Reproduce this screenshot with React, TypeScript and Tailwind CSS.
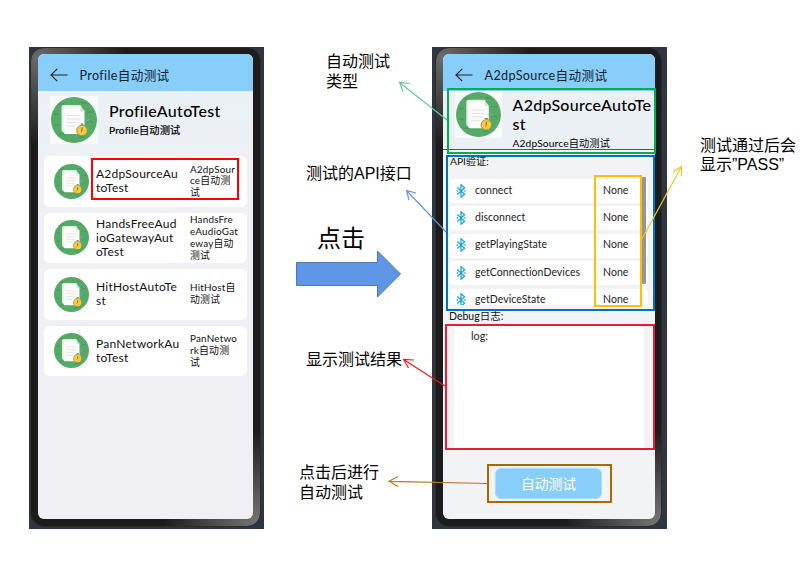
import type { ReactNode } from 'react';

const uiFont = "font-['Lato','Noto_Sans_CJK_SC',sans-serif]";

function Lines({ lines, className }: { lines: string[]; className: string }) {
  return (
    <div className={className}>
      {lines.map((line) => (
        <div key={line} className="whitespace-nowrap">{line}</div>
      ))}
    </div>
  );
}

function ReportIcon({ className }: { className: string }) {
  return (
    <svg viewBox="0 0 46 46" className={className}>
      <circle cx="23" cy="23" r="23" fill="#56aa67" />
      <path d="M8 7h5M30 6h6M3 17h5M36 15h6M3 28h5M36 25h6M8 37h6M28 40h5" stroke="#3f9152" strokeWidth="0.8" />
      <rect x="10.5" y="8" width="20" height="27" rx="2" fill="#e2eee4" />
      <path d="M14.5 9.5h15l4 4.500V35a2 2 0 0 1-2 2h-17a2 2 0 0 1-2-2V11.500a2 2 0 0 1 2-2z" fill="#fafbfa" />
      <path d="M29.500 9.500V14h4z" fill="#d5ddd6" />
      <path d="M16 18.500h13M16 22h13M16 25.500h11M16 29h8" stroke="#dde1dd" strokeWidth="0.9" />
      <path d="M8 18 18 8M14 32 33 14M22 37 38 22M10 12 34 36M24 10 40 27" stroke="#ffffff" strokeOpacity="0.18" strokeWidth="0.7" />
      <circle cx="31" cy="33.500" r="5.300" fill="#f7cb3f" stroke="#9c8a45" strokeWidth="0.9" />
      <path d="M31 30.300v3.700l-1.200 1" stroke="#7b6a35" strokeWidth="1" fill="none" />
      <path d="M29.700 27.200h2.600" stroke="#66734e" strokeWidth="1.200" />
    </svg>
  );
}

function BluetoothIcon() {
  return (
    <svg viewBox="0 0 10 14" className="h-[14px] w-[10px]" fill="none" stroke="#20a5df" strokeWidth="1.300">
      <path d="M1.300 3.400 8.600 10.200 5 13.200V.8L8.600 3.800 1.300 10.600" />
      <path d="M.6 7H2M8.200 7h1.400" strokeWidth="1.400" />
    </svg>
  );
}

function TopBar({ title }: { title: string }) {
  return (
    <div className="flex h-[37px] shrink-0 items-center bg-[#87cefa] pt-[5px] pl-[12px]">
      <svg viewBox="0 0 18 14" className="h-[14px] w-[18px]" fill="none" stroke="#17242d" strokeWidth="1.200">
        <path d="M17.500 7H1M7.200.8 1 7l6.200 6.200" />
      </svg>
      <span className="ml-[11.500px] pt-px text-[12.600px] leading-[16px] tracking-[0.350px] text-[#10202a]">{title}</span>
    </div>
  );
}

function Phone({ frame, screen, children }: { frame: string; screen: string; children: ReactNode }) {
  return (
    <div className={`h-[482px] w-[235px] shrink-0 bg-[#303641] ${frame}`}>
      <div className="h-[480px] rounded-[14px] border border-[#2b2c2e] bg-[radial-gradient(circle_at_3%_2%,#6a6a6a_0,#555_4%,transparent_17%),radial-gradient(circle_at_100%_100%,#777_0,#5a5a5a_6%,transparent_18%)] bg-[#1c1c1c] pt-[6px]">
        <div className={`flex h-[465px] flex-col overflow-hidden rounded-[6px] ${screen}`}>{children}</div>
      </div>
    </div>
  );
}

const profiles = [
  { title: ['A2dpSourceAu', 'toTest'], sub: ['A2dpSour', 'ce自动测', '试'] },
  { title: ['HandsFreeAud', 'ioGatewayAut', 'oTest'], sub: ['HandsFre', 'eAudioGat', 'eway自动', '测试'] },
  { title: ['HitHostAutoTe', 'st'], sub: ['HitHost自', '动测试'] },
  { title: ['PanNetworkAu', 'toTest'], sub: ['PanNetwo', 'rk自动测', '试'] },
];

const apis = ['connect', 'disconnect', 'getPlayingState', 'getConnectionDevices', 'getDeviceState'];

function ProfilePhone() {
  return (
    <Phone frame="pl-px pr-[3px]" screen="ml-[7px] w-[215px] bg-[#efeff4]">
      <TopBar title="Profile自动测试" />
      <div className="flex h-[61px] shrink-0 bg-linear-to-b from-[#eaf1f5] to-[#edf0f4] pt-[5px] pl-[12px]">
        <div className="flex size-[48px] items-center justify-center bg-[#f8fafa]">
          <ReportIcon className="size-[46px]" />
        </div>
        <div className="ml-[11px] pt-[5px] text-black">
          <div className="text-[16px] leading-[20px] font-medium tracking-[0.300px]">ProfileAutoTest</div>
          <div className="text-[10.200px] leading-[18px] tracking-[0.150px] [-webkit-text-stroke:0.200px_#000]">Profile自动测试</div>
        </div>
      </div>
      <div className="mt-[4px] flex flex-col gap-[6px] px-[6px]">
        {profiles.map((p) => (
          <div key={p.title[0]} className="flex h-[50.500px] items-center rounded-[6px] bg-white pl-[10px]">
            <ReportIcon className="size-[35px] shrink-0" />
            <Lines lines={p.title} className="ml-[7px] w-[94px] shrink-0 text-[12px] leading-[13.800px] tracking-[0.250px] text-[#111]" />
            <Lines lines={p.sub} className="text-[9.900px] leading-[11.800px] tracking-[0.200px] text-[#111]" />
          </div>
        ))}
      </div>
    </Phone>
  );
}

function SourcePhone() {
  return (
    <Phone frame="pl-[3px] pr-[5px]" screen="ml-[7px] w-[212px] bg-[#f1f3f5]">
      <TopBar title="A2dpSource自动测试" />
      <div className="flex h-[59px] shrink-0 border-b border-[#555] bg-[#ebf0f4] pl-[12px]">
        <div className="flex size-[47px] items-center justify-center bg-[#f8fafa]">
          <ReportIcon className="size-[45px]" />
        </div>
        <div className="ml-[10.500px] pt-[5px] text-black">
          <Lines lines={['A2dpSourceAutoTe', 'st']} className="text-[16px] leading-[18.500px] font-medium tracking-[0.250px]" />
          <div className="text-[10.200px] leading-[20px] tracking-[0.150px]">A2dpSource自动测试</div>
        </div>
      </div>
      <div className="h-[27px] shrink-0 pt-[4px] pl-[7px] text-[10.200px] leading-[15px] text-[#111]">API验证:</div>
      <div className="flex h-[128px] shrink-0 overflow-hidden pl-[6px]">
        <div className="flex w-[199px] flex-col gap-[3.400px] pt-[2px]">
          {apis.map((name) => (
            <div key={name} className="flex h-[24px] shrink-0 items-center rounded-[5px] bg-white pb-px pl-[7px] text-[10.500px] tracking-[0.050px] text-[#222]">
              <BluetoothIcon />
              <span className="ml-[9px] w-[128px]">{name}</span>
              <span>None</span>
            </div>
          ))}
        </div>
        <div className="-ml-[6px] h-[107px] w-[4px] rounded-[1px] bg-[#969696]" />
      </div>
      <div className="h-[22px] shrink-0 pt-[4px] pl-[6px] text-[10.500px] leading-[15px] text-[#111]">Debug日志:</div>
      <div className="ml-[11px] h-[121px] w-[190px] shrink-0 bg-white pt-[1px] pl-[17px] text-[10.800px] leading-[16px] text-[#222]">log:</div>
      <button className="mt-[20px] ml-[52px] h-[31px] w-[107px] shrink-0 rounded-[6px] border border-[#a9daf7] bg-[#87cefa] text-[13.800px] leading-[29px] text-white">
        自动测试
      </button>
    </Phone>
  );
}

function Callouts() {
  return (
    <svg viewBox="0 0 810 587" className="pointer-events-none absolute inset-0 h-[587px] w-[810px]" fill="none">
      <rect x="92" y="159" width="146" height="40" stroke="#fe0000" strokeWidth="2" />
      <rect x="448" y="89" width="207" height="64" stroke="#00b050" strokeWidth="2" />
      <rect x="447" y="156" width="207" height="154" stroke="#0070c0" strokeWidth="2" />
      <rect x="595" y="176" width="46" height="130" stroke="#ffc000" strokeWidth="2" />
      <rect x="446" y="325" width="208" height="124" stroke="#e01f3d" strokeWidth="2" />
      <rect x="488" y="465" width="123" height="37" stroke="#ad6900" strokeWidth="2" />
      <path d="M447 120 399.500 82.500M403 91.500 399.500 82.500 409.500 83.500" stroke="#5cc994" strokeWidth="1.100" />
      <path d="M446 232 406.500 190.500M409 200 406.500 190.500 416 193" stroke="#5c91e5" strokeWidth="1.100" />
      <path d="M642 239 681.500 166.500M673 172 681.500 166.500 681.500 176" stroke="#fcc126" strokeWidth="1.200" />
      <path d="M445 386 403.500 359.500M408.500 368 403.500 359.500 414 360" stroke="#fb1515" strokeWidth="1.200" />
      <path d="M487 483.500 389 481.300M398 476.500 389 481.300 398 486.500" stroke="#b57a24" strokeWidth="1.200" />
      <path d="M296.500 262.500h81V251l23 23-23 23v-11.500h-81z" fill="#6096e6" stroke="#4a78b4" strokeWidth="1" />
    </svg>
  );
}

function Note({ lines, className }: { lines: string[]; className: string }) {
  return (
    <Lines
      lines={lines}
      className={`absolute font-['Liberation_Sans','Noto_Sans_CJK_SC',sans-serif] text-black ${className}`}
    />
  );
}

export default function App() {
  return (
    <main className={`relative flex h-[587px] w-[810px] gap-[168px] overflow-hidden bg-white pt-[47px] pl-[29px] ${uiFont}`}>
      <ProfilePhone />
      <SourcePhone />
      <Callouts />
      <Note lines={['自动测试', '类型']} className="top-[52px] left-[326px] text-[16px] leading-[19.500px]" />
      <Note lines={['测试的API接口']} className="top-[164px] left-[306px] text-[16px] leading-[20px]" />
      <Note lines={['点击']} className="top-[225px] left-[317px] text-[24px] leading-[28px]" />
      <Note lines={['显示测试结果']} className="top-[350px] left-[306px] text-[16px] leading-[20px]" />
      <Note lines={['点击后进行', '自动测试']} className="top-[463px] left-[299px] text-[16px] leading-[20px]" />
      <Note lines={['测试通过后会', '显示”PASS”']} className="top-[136px] left-[700px] text-[16px] leading-[19px]" />
    </main>
  );
}
